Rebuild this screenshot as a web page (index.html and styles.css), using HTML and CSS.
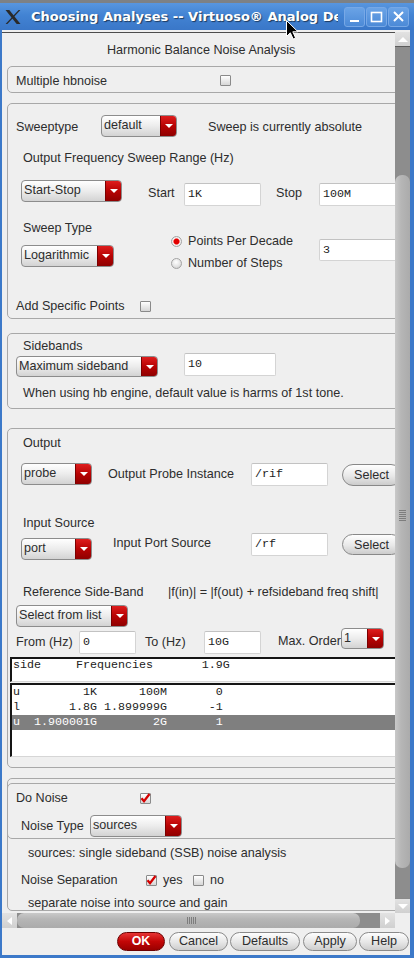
FILE: index.html
```html
<!DOCTYPE html>
<html>
<head>
<meta charset="utf-8">
<link rel="stylesheet" href="styles.css">
</head>
<body>
<div class="window">
  <div class="titlebar">
    <svg class="appicon" width="16" height="16" viewBox="0 0 16 16"><path d="M0.5 1H4.3L15.5 15H11.7Z" fill="#2a2a2a"/><path d="M13.6 1H15.4L2.4 15H0.6Z" fill="#2a2a2a"/></svg>
    <div class="title">Choosing Analyses -- Virtuoso® Analog Design Environment (1)</div>
    <div class="wbtns">
      <span class="wbtn"><svg width="19" height="18" viewBox="0 0 19 18"><rect x="5" y="12" width="9" height="2" fill="#fff"/></svg></span>
      <span class="wbtn"><svg width="19" height="18" viewBox="0 0 19 18"><rect x="4.5" y="4.5" width="10" height="9" fill="none" stroke="#fff" stroke-width="1.6"/></svg></span>
      <span class="wbtn"><svg width="19" height="18" viewBox="0 0 19 18"><path d="M5 4L14 13M14 4L5 13" stroke="#fff" stroke-width="2"/></svg></span>
    </div>
  </div>

  <div class="client">
    <div class="scrollarea">
      <div class="viewport">
        <div class="content">
          <div class="heading">Harmonic Balance Noise Analysis</div>

          <div class="grp g-a">
            <div class="row a1"><span class="lbl w204">Multiple hbnoise</span><span class="cb"></span></div>
          </div>

          <div class="grp g-b">
            <div class="row b1">
              <span class="lbl w85">Sweeptype</span>
              <div class="dd w76"><span class="txt">default</span><span class="arr"></span></div>
              <span class="lbl ml31">Sweep is currently absolute</span>
            </div>
            <div class="row b2"><span class="lbl">Output Frequency Sweep Range (Hz)</span></div>
            <div class="row b3">
              <div class="dd w101"><span class="txt">Start-Stop</span><span class="arr"></span></div>
              <span class="lbl ml26 w36 mt4">Start</span>
              <div class="in w77 mt3">1K</div>
              <span class="lbl ml15 w43 mt4">Stop</span>
              <div class="in w90 mt3">100M</div>
            </div>
            <div class="row b45">
              <div class="sweepcol">
                <span class="lbl pl2">Sweep Type</span>
                <div class="dd w93 mt8"><span class="txt">Logarithmic</span><span class="arr"></span></div>
              </div>
              <div class="radios">
                <div class="radio"><span class="rb on"></span><span class="lbl">Points Per Decade</span></div>
                <div class="radio"><span class="rb"></span><span class="lbl">Number of Steps</span></div>
              </div>
              <div class="in w90 h22 mt20">3</div>
            </div>
            <div class="row b6"><span class="lbl w124">Add Specific Points</span><span class="cb"></span></div>
          </div>

          <div class="grp g-c">
            <div class="row c1"><span class="lbl">Sidebands</span></div>
            <div class="row c2">
              <div class="dd w142 h21 mt3"><span class="txt">Maximum sideband</span><span class="arr"></span></div>
              <div class="in w92 ml26">10</div>
            </div>
            <div class="row c3"><span class="lbl">When using hb engine, default value is harms of 1st tone.</span></div>
          </div>

          <div class="grp g-d">
            <div class="row d1"><span class="lbl">Output</span></div>
            <div class="row d2">
              <div class="dd w71"><span class="txt">probe</span><span class="arr"></span></div>
              <span class="lbl ml16 w143 mt2">Output Probe Instance</span>
              <div class="in w77">/rif</div>
              <span class="btn ml14 mt1">Select</span>
            </div>
            <div class="row d3"><span class="lbl">Input Source</span></div>
            <div class="row d4">
              <div class="dd w71 mt5"><span class="txt">port</span><span class="arr"></span></div>
              <span class="lbl ml21 w138 mt1">Input Port Source</span>
              <div class="in w77">/rf</div>
              <span class="btn ml14 mt1 h21">Select</span>
            </div>
            <div class="row d5"><span class="lbl w145">Reference Side-Band</span><span class="lbl">|f(in)| = |f(out) + refsideband freq shift|</span></div>
            <div class="row d6"><div class="dd w112"><span class="txt">Select from list</span><span class="arr"></span></div></div>
            <div class="row d7">
              <span class="lbl w63 mt5">From (Hz)</span>
              <div class="in w57 mt3">0</div>
              <span class="lbl ml9 w59 mt5">To (Hz)</span>
              <div class="in w57 mt3">10G</div>
              <span class="lbl ml17 w63 mt4">Max. Order</span>
              <div class="dd w43 h21"><span class="txt">1</span><span class="arr"></span></div>
            </div>
            <div class="lhead">side     Frequencies       1.9G</div>
            <div class="lbox"><div class="lrow">u         1K      100M       0</div><div class="lrow">l       1.8G 1.899999G      -1</div><div class="lrow sel">u  1.900001G        2G       1</div></div>
          </div>

          <div class="grp g-e">
            <div class="einner">
              <div class="row e1"><span class="lbl w124">Do Noise</span><span class="cb on"><svg width="13" height="12" viewBox="0 0 13 12"><path d="M2.5 6.2L5 9.2L10.5 2" stroke="#d40000" stroke-width="2.3" fill="none"/></svg></span></div>
              <div class="row e2">
                <span class="lbl w69 mt2">Noise Type</span>
                <div class="dd w92"><span class="txt">sources</span><span class="arr"></span></div>
              </div>
            </div>
            <div class="row e3"><span class="lbl">sources: single sideband (SSB) noise analysis</span></div>
            <div class="row e4">
              <span class="lbl w125">Noise Separation</span>
              <span class="cb on"><svg width="13" height="12" viewBox="0 0 13 12"><path d="M2.5 6.2L5 9.2L10.5 2" stroke="#d40000" stroke-width="2.3" fill="none"/></svg></span>
              <span class="lbl ml6 w30">yes</span>
              <span class="cb"></span>
              <span class="lbl ml6">no</span>
            </div>
            <div class="row e5"><span class="lbl">separate noise into source and gain</span></div>
          </div>
        </div>
      </div>

      <div class="vscroll">
        <div class="sbtn up"><span class="tri-up"></span></div>
        <div class="vtrack"><div class="vthumb"><span class="vgrip"></span></div></div>
        <div class="sbtn down"><span class="tri-down"></span></div>
      </div>
      <div class="hscroll">
        <div class="sbtn left"><span class="tri-left"></span></div>
        <div class="htrack"><div class="hthumb"><span class="hgrip"></span></div></div>
        <div class="sbtn right"><span class="tri-right"></span></div>
      </div>
      <div class="corner"></div>
    </div>

    <div class="buttons">
      <span class="pbtn ok">OK</span>
      <span class="pbtn b-cancel">Cancel</span>
      <span class="pbtn b-def">Defaults</span>
      <span class="pbtn b-apply">Apply</span>
      <span class="pbtn b-help">Help</span>
    </div>
  </div>
</div>
<svg class="cursor" width="13" height="20" viewBox="0 0 13 20"><path d="M0.5 0.5V16.5L4.3 12.8L7.2 19L9.6 17.9L6.8 11.8H12Z" fill="#000" stroke="#fff" stroke-width="1"/></svg>
</body>
</html>
```
FILE: styles.css
```css
* { box-sizing: border-box; margin: 0; padding: 0; }
html, body { width: 414px; height: 958px; overflow: hidden; }
body {
  background: #7d8185;
  font-family: "Liberation Sans", Arial, sans-serif;
  font-size: 12.6px;
  color: #2d2d2d;
  position: relative;
}

/* window frame */
.window {
  margin-top: 3px;
  height: 955px;
  background: #3c79c9;
  display: flex;
  flex-direction: column;
  padding-bottom: 3px;
}
.titlebar {
  height: 27px;
  flex: none;
  display: flex;
  align-items: center;
  background: linear-gradient(#5896df, #4283d3 45%, #3a77c8);
}
.appicon { margin-left: 5px; flex: none; }
.title {
  margin-left: 10px;
  width: 307px;
  overflow: hidden;
  white-space: nowrap;
  color: #fff;
  font-family: "DejaVu Sans", sans-serif;
  font-weight: bold;
  font-size: 13px;
  text-shadow: 1px 1px 1px rgba(0, 0, 0, 0.55);
}
.wbtns { margin-left: 6px; display: flex; gap: 1px; }
.wbtn {
  width: 21px;
  height: 20px;
  border: 1px solid #77a8e6;
  border-radius: 3px;
  background: linear-gradient(#6aa3e6, #4c8ad7);
  display: flex;
  align-items: center;
  justify-content: center;
}

.client {
  flex: 1;
  margin: 0 4px 0 2px;
  background: #efefef;
  padding-top: 2px;
  display: flex;
  flex-direction: column;
}

/* scroll area */
.scrollarea {
  display: grid;
  grid-template-columns: 393px 15px;
  grid-template-rows: 881px 15px;
}
.viewport {
  border-top: 1px solid #4d4d4d;
  overflow: hidden;
  background: #efefef;
}
.content { width: 440px; }

.vscroll { display: flex; flex-direction: column; background: #8d8d8d; }
.sbtn {
  flex: none;
  width: 15px;
  height: 15px;
  background: linear-gradient(#e2e2e2, #d0d0d0);
  display: flex;
  align-items: center;
  justify-content: center;
}
.sbtn.up { border-bottom: 1px solid #5c5c5c; }
.sbtn.down { border-top: 1px solid #8a8a8a; }
.vtrack { flex: 1; }
.vthumb {
  margin-top: 128px;
  height: 693px;
  border-radius: 7px;
  background: linear-gradient(90deg, #c9c9c9, #b6b6b6 40%, #ababab);
  display: flex;
  align-items: center;
  justify-content: center;
}
.vgrip {
  width: 7px;
  height: 11px;
  margin-top: -12px;
  background: repeating-linear-gradient(#7d7d7d 0 1px, transparent 1px 2px);
}
.hscroll { display: flex; background: #8d8d8d; }
.htrack { flex: 1; }
.hthumb {
  width: 343px;
  height: 15px;
  border-radius: 7px;
  background: linear-gradient(#c9c9c9, #b6b6b6 40%, #ababab);
  display: flex;
  align-items: center;
  justify-content: center;
}
.hgrip {
  width: 9px;
  height: 7px;
  margin-left: 5px;
  background: repeating-linear-gradient(90deg, #7d7d7d 0 1px, transparent 1px 2px);
}
.corner { background: #efefef; }

.tri-up { border-left: 5px solid transparent; border-right: 5px solid transparent; border-bottom: 5px solid #fff; }
.tri-down { border-left: 5px solid transparent; border-right: 5px solid transparent; border-top: 5px solid #fff; }
.tri-left { border-top: 4px solid transparent; border-bottom: 4px solid transparent; border-right: 5px solid #fff; }
.tri-right { border-top: 4px solid transparent; border-bottom: 4px solid transparent; border-left: 5px solid #fff; }

/* bottom buttons */
.buttons {
  height: 27px;
  display: flex;
  justify-content: flex-end;
  align-items: flex-start;
  padding: 4px 1px 0 0;
  gap: 3px;
}
.pbtn {
  height: 19px;
  border: 1px solid #8a8a8a;
  border-radius: 10px;
  background: linear-gradient(#fdfdfd, #e6e6e6 55%, #cdcdcd);
  line-height: 17px;
  text-align: center;
  white-space: nowrap;
}
.ok {
  width: 48px;
  background: linear-gradient(#e63434, #c20606 50%, #990000);
  border-color: #6d0000;
  color: #fff;
  font-weight: bold;
  font-size: 12.4px;
  margin-right: 1px;
}
.b-cancel { width: 59px; }
.b-def { width: 70px; margin-left: -1px; }
.b-apply { width: 54px; }
.b-help { width: 50px; margin-left: -1px; }

/* content */
.heading {
  height: 33px;
  padding: 8px 0 0 105px;
  line-height: 18px;
}
.grp {
  margin-left: 5px;
  width: 430px;
  border: 1px solid #a8a8a8;
  border-radius: 5px;
}
.row { display: flex; align-items: flex-start; }
.lbl { white-space: nowrap; line-height: 18px; flex: none; }

.g-a { height: 27px; }
.a1 { height: 25px; margin-top: 1px; align-items: center; padding-left: 8px; }

.g-b { height: 216px; margin-top: 10px; }
.b1 { margin-top: 11px; height: 22px; padding-left: 8px; align-items: center; }
.b1 .lbl { padding-top: 2px; }
.b2 { margin-top: 12px; height: 18px; padding-left: 15px; }
.b3 { margin-top: 13px; height: 26px; padding-left: 13px; }
.b45 { margin-top: 13px; padding-left: 13px; }
.sweepcol { width: 150px; display: flex; flex-direction: column; align-items: flex-start; }
.radios { width: 148px; margin-top: 12px; display: flex; flex-direction: column; gap: 2px; }
.radio { height: 20px; display: flex; align-items: center; gap: 6px; }
.b6 { margin-top: 23px; height: 20px; padding-left: 8px; align-items: center; }

.g-c { height: 76px; margin-top: 14px; }
.c1 { margin-top: 6px; padding-left: 15px; }
.c1 .lbl { line-height: 13px; }
.c2 { height: 24px; padding-left: 8px; }
.c3 { margin-top: 7px; height: 18px; padding-left: 15px; }

.g-d { height: 340px; margin-top: 19px; }
.d1 { margin-top: 5px; height: 18px; padding-left: 15px; }
.d2 { margin-top: 11px; height: 23px; padding-left: 13px; }
.d3 { margin-top: 28px; height: 18px; padding-left: 15px; }
.d4 { margin-top: 1px; height: 27px; padding-left: 13px; }
.d5 { margin-top: 23px; height: 18px; padding-left: 15px; }
.d6 { margin-top: 4px; height: 22px; padding-left: 8px; }
.d7 { margin-top: 1px; height: 26px; padding-left: 8px; }

.lhead, .lbox {
  margin-left: 2px;
  background: #fff;
  border-top: 2px solid #151515;
  border-left: 2px solid #151515;
  border-bottom: 1px solid #d6d6d6;
  font-family: "Liberation Mono", "Courier New", monospace;
  font-size: 11.67px;
  color: #222;
}
.lhead { margin-top: 3px; height: 25px; line-height: 12px; padding-left: 1px; white-space: pre; }
.lbox { margin-top: 1px; height: 74px; }
.lrow { height: 15px; line-height: 15px; padding-left: 1px; white-space: pre; }
.lrow.sel { background: #7f7f7f; color: #fff; }

.g-e { height: 133px; margin-top: 10px; }
.einner {
  margin: 4px 0 0 -1px;
  height: 56px;
  border: 1px solid #a8a8a8;
  border-radius: 5px;
}
.e1 { margin-top: 4px; height: 20px; padding-left: 8px; align-items: center; }
.e2 { margin-top: 7px; height: 22px; padding-left: 13px; }
.e3 { margin-top: 5px; height: 18px; padding-left: 20px; }
.e4 { margin-top: 8px; height: 20px; padding-left: 13px; align-items: center; }
.e5 { margin-top: 4px; height: 18px; padding-left: 20px; }

/* widgets */
.dd {
  flex: none;
  display: flex;
  height: 22px;
  border: 1px solid #8c8c8c;
  border-radius: 4px;
  overflow: hidden;
  background: linear-gradient(#ffffff, #ececec 50%, #d3d3d3);
}
.dd .txt {
  flex: 1;
  padding-left: 2px;
  line-height: 18px;
  white-space: nowrap;
  overflow: hidden;
}
.dd .arr {
  flex: none;
  width: 16px;
  border-left: 1px solid #7a0000;
  background: linear-gradient(#de1d1d, #b70303 50%, #8f0000);
  display: flex;
  align-items: center;
  justify-content: center;
}
.dd .arr::after {
  content: "";
  border-left: 4px solid transparent;
  border-right: 4px solid transparent;
  border-top: 4px solid #fff;
}
.in {
  flex: none;
  height: 23px;
  background: #fff;
  border: 1px solid #d4d4d4;
  border-top-color: #c2c2c2;
  border-radius: 2px;
  padding-left: 3px;
  font-family: "Liberation Mono", "Courier New", monospace;
  font-size: 11.67px;
  line-height: 20px;
  color: #222;
}
.btn {
  flex: none;
  width: 60px;
  height: 22px;
  border: 1px solid #888;
  border-radius: 11px;
  background: linear-gradient(#fefefe, #e8e8e8 55%, #cccccc);
  padding-left: 11px;
  line-height: 20px;
  white-space: nowrap;
}
.cb {
  flex: none;
  position: relative;
  width: 11px;
  height: 11px;
  border: 1px solid #8a8a8a;
  border-radius: 1px;
  background: linear-gradient(#ffffff, #d6d6d6);
}
.cb svg { position: absolute; left: -2px; top: -2px; }
.rb {
  flex: none;
  width: 11px;
  height: 11px;
  border-radius: 50%;
  border: 1px solid #a3a3a3;
  background: radial-gradient(circle at 45% 35%, #ffffff, #e4e4e4 55%, #c4c4c4);
}
.rb.on { background: radial-gradient(circle at 50% 50%, #e00000 0 2.5px, #ff6b6b 3px, #f4f4f4 3.6px, #cfcfcf); }

/* sizes */
.w30 { width: 30px; } .w36 { width: 36px; } .w43 { width: 43px; } .w57 { width: 57px; }
.w59 { width: 59px; } .w63 { width: 63px; } .w69 { width: 69px; } .w71 { width: 71px; }
.w76 { width: 76px; } .w77 { width: 77px; } .w85 { width: 85px; } .w90 { width: 90px; }
.w92 { width: 92px; } .w93 { width: 93px; } .w101 { width: 101px; } .w112 { width: 112px; }
.w124 { width: 124px; } .w125 { width: 125px; } .w138 { width: 138px; } .w142 { width: 142px; }
.w143 { width: 143px; } .w145 { width: 145px; } .w204 { width: 204px; }
.h21 { height: 21px; } .h22 { height: 22px; }
.ml6 { margin-left: 6px; } .ml9 { margin-left: 9px; } .ml14 { margin-left: 14px; } .ml15 { margin-left: 15px; }
.ml16 { margin-left: 16px; } .ml17 { margin-left: 17px; } .ml21 { margin-left: 21px; } .ml26 { margin-left: 26px; }
.ml31 { margin-left: 31px; }
.mt1 { margin-top: 1px; } .mt2 { margin-top: 2px; } .mt3 { margin-top: 3px; } .mt4 { margin-top: 4px; }
.mt5 { margin-top: 5px; } .mt8 { margin-top: 8px; } .mt20 { margin-top: 20px; }
.pl2 { padding-left: 2px; }

.cursor { position: absolute; left: 286px; top: 20px; }
```
